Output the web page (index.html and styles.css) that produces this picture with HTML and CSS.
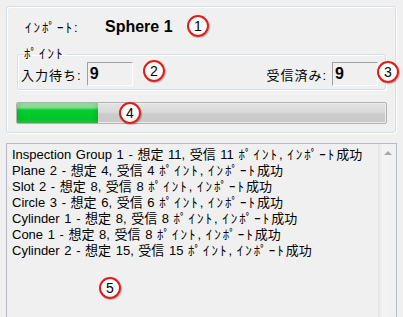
FILE: index.html
```html
<!DOCTYPE html>
<html lang="ja">
<head>
    <meta charset="UTF-8">
    <title>ｲﾝﾎﾟｰﾄ</title>
    <link rel="stylesheet" href="styles.css">
</head>
<body>
    <div class="import-group">
        <div class="import-row">
            <span class="import-label"><span class="hw">ｲﾝﾎﾟｰﾄ</span>:</span>
            <span class="import-name">Sphere 1</span>
        </div>

        <fieldset class="points">
            <legend><span class="hw">ﾎﾟｲﾝﾄ</span></legend>
            <div class="points-row">
                <label class="field">入力待ち:<input type="text" class="count-box" value="9" readonly></label>
                <label class="field">受信済み:<input type="text" class="count-box" value="9" readonly></label>
            </div>
        </fieldset>

        <div class="progress">
            <div class="progress-fill" style="width: 22%"></div>
        </div>
    </div>

    <div class="log">
        <div class="log-lines">
            <div>Inspection Group 1 - 想定 11, 受信 11 <span class="hw">ﾎﾟｲﾝﾄ</span>, <span class="hw">ｲﾝﾎﾟｰﾄ</span>成功</div>
            <div>Plane 2 - 想定 4, 受信 4 <span class="hw">ﾎﾟｲﾝﾄ</span>, <span class="hw">ｲﾝﾎﾟｰﾄ</span>成功</div>
            <div>Slot 2 - 想定 8, 受信 8 <span class="hw">ﾎﾟｲﾝﾄ</span>, <span class="hw">ｲﾝﾎﾟｰﾄ</span>成功</div>
            <div>Circle 3 - 想定 6, 受信 6 <span class="hw">ﾎﾟｲﾝﾄ</span>, <span class="hw">ｲﾝﾎﾟｰﾄ</span>成功</div>
            <div>Cylinder 1 - 想定 8, 受信 8 <span class="hw">ﾎﾟｲﾝﾄ</span>, <span class="hw">ｲﾝﾎﾟｰﾄ</span>成功</div>
            <div>Cone 1 - 想定 8, 受信 8 <span class="hw">ﾎﾟｲﾝﾄ</span>, <span class="hw">ｲﾝﾎﾟｰﾄ</span>成功</div>
            <div>Cylinder 2 - 想定 15, 受信 15 <span class="hw">ﾎﾟｲﾝﾄ</span>, <span class="hw">ｲﾝﾎﾟｰﾄ</span>成功</div>
        </div>
        <div class="scrollbar"><span class="arrow-up"></span></div>
    </div>

    <!-- callout numbers -->
    <span class="callout c1">1</span>
    <span class="callout c2">2</span>
    <span class="callout c3">3</span>
    <span class="callout c4">4</span>
    <span class="callout c5">5</span>
</body>
</html>
```

FILE: styles.css
```css
body {
    margin: 0;
    width: 403px;
    height: 317px;
    overflow: hidden;
    position: relative;
    background: #f0f0f0;
    color: #000;
    font-family: "Liberation Sans", "Noto Sans CJK JP", sans-serif;
    font-size: 13px;
}
/* half-width katakana are wider in the original UI font */
.hw {
    letter-spacing: 2px;
}
.import-group {
    margin: 6px 0 0 6px;
    width: 390px;
    box-sizing: border-box;
    padding-bottom: 8px;
    border: 1px solid #d5dfe5;
    border-radius: 3px;
    box-shadow: inset 1px 1px 0 #fff, 1px 1px 0 #fff;
}
.import-row {
    height: 39px;
    display: flex;
    align-items: center;
    padding-left: 18px;
}
.import-label {
    width: 80px;
}
.import-name {
    font-weight: bold;
    font-size: 16px;
}
.points {
    margin: 0 9px 0 10px;
    padding: 0 7px 3px 3px;
    border: 1px solid #d5dfe5;
    border-radius: 3px;
    box-shadow: inset 1px 1px 0 #fff, 1px 1px 0 #fff;
}
.points legend {
    padding: 0 1px;
    margin-left: 2px;
    line-height: 16px;
}
.points-row {
    display: flex;
    justify-content: space-between;
    height: 24px;
}
.field {
    display: flex;
    align-items: center;
    gap: 5px;
    letter-spacing: 1px;
}
.count-box {
    width: 46px;
    height: 24px;
    box-sizing: border-box;
    margin: 0;
    padding: 0 2px;
    border: 1px solid;
    border-color: #a0a0a0 #fff #fff #a0a0a0;
    background: #f0f0f0;
    font-family: "Liberation Sans", sans-serif;
    font-weight: bold;
    font-size: 16px;
    letter-spacing: normal;
    color: #000;
    outline: none;
}
.progress {
    margin: 12px 8px 0 9px;
    height: 22px;
    box-sizing: border-box;
    border: 1px solid #b2b2b2;
    border-radius: 2px;
    background: linear-gradient(#e3e3e3, #dadada 45%, #cbcbcb 55%, #c9c9c9);
    box-shadow: inset 0 0 0 1px #ececec;
    overflow: hidden;
}
.progress-fill {
    height: 100%;
    background: linear-gradient(#a8edb3, #86e294 22%, #08cc2e 36%, #00c82a 80%, #2fd04c);
    box-shadow: inset 0 0 6px rgba(0, 80, 0, 0.3);
}
.log {
    margin: 10px 0 0 6px;
    width: 391px;
    height: 200px;
    box-sizing: border-box;
    border: 1px solid #b7bcc4;
    display: flex;
}
.log-lines {
    flex: 1;
    padding: 3px 0 0 5px;
    line-height: 16px;
    word-spacing: 1px;
    white-space: nowrap;
}
.scrollbar {
    width: 17px;
    border-left: 1px solid #e3e3e3;
    background: linear-gradient(90deg, #e8e8e8, #f3f3f3 20%, #f0f0f0);
    position: relative;
}
.arrow-up {
    position: absolute;
    left: 5px;
    top: 7px;
    border-left: 4px solid transparent;
    border-right: 4px solid transparent;
    border-bottom: 4px solid #a8a8a8;
}
.callout {
    position: absolute;
    width: 18px;
    height: 18px;
    border: 2px solid #e11b1b;
    border-radius: 50%;
    background: radial-gradient(circle at 40% 35%, #fff 55%, #e8e8e8);
    box-shadow: 1px 1px 1px rgba(0, 0, 0, 0.25);
    font-family: "Liberation Sans", sans-serif;
    font-size: 14px;
    line-height: 18px;
    text-align: center;
    color: #000;
}
.c1 { left: 187px; top: 15px; }
.c2 { left: 143px; top: 60px; }
.c3 { left: 377px; top: 61px; }
.c4 { left: 119px; top: 102px; }
.c5 { left: 99px; top: 277px; }
```
